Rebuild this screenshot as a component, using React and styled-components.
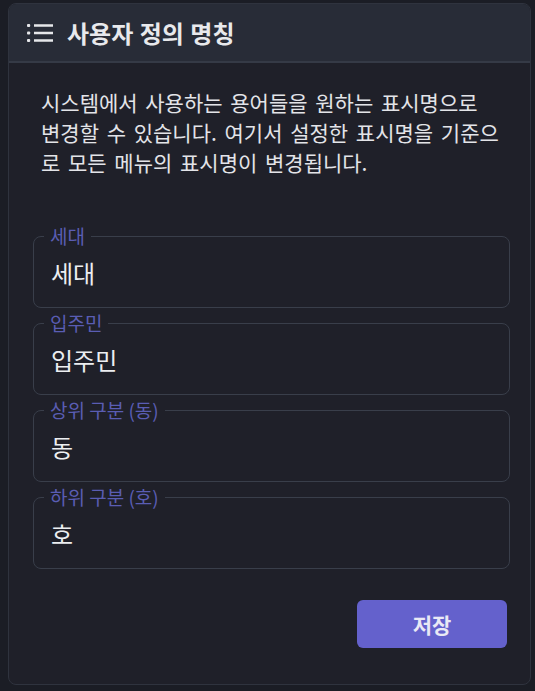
import styled, { createGlobalStyle } from "styled-components";

const GlobalStyle = createGlobalStyle`
  html, body {
    margin: 0;
    padding: 0;
    background-color: #1b1d25;
  }
  body {
    font-family: "Noto Sans CJK KR", "Noto Sans", sans-serif;
    color: #e6e7ea;
  }
  * {
    box-sizing: border-box;
  }
`;

// 용어 목록
const fields = [
  { label: "세대", value: "세대" },
  { label: "입주민", value: "입주민" },
  { label: "상위 구분 (동)", value: "동" },
  { label: "하위 구분 (호)", value: "호" },
];

const ListIcon = () => (
  <svg width="26" height="22" viewBox="0 0 26 22" fill="none">
    <rect x="0" y="2" width="3.2" height="3" rx="1" fill="#e6e7ea" />
    <rect x="0" y="9.5" width="3.2" height="3" rx="1" fill="#e6e7ea" />
    <rect x="0" y="17" width="3.2" height="3" rx="1" fill="#e6e7ea" />
    <path d="M7 3.5H26M7 11H26M7 18.5H26" stroke="#e6e7ea" strokeWidth="2.4" />
  </svg>
);

const App = () => {
  return (
    <Page>
      <GlobalStyle />
      <Card>
        <Header>
          <ListIcon />
          <Title>사용자 정의 명칭</Title>
        </Header>
        <Body>
          <Desc>
            시스템에서 사용하는 용어들을 원하는 표시명으로 변경할 수
            있습니다. 여기서 설정한 표시명을 기준으로 모든 메뉴의 표시명이
            변경됩니다.
          </Desc>
          <FieldList>
            {fields.map((f) => (
              <Field key={f.label}>
                <Legend>{f.label}</Legend>
                <Input defaultValue={f.value} />
              </Field>
            ))}
          </FieldList>
          <Actions>
            <SaveButton>저장</SaveButton>
          </Actions>
        </Body>
      </Card>
    </Page>
  );
};

const Page = styled.div`
  width: 535px;
  height: 691px;
  padding: 3px 4px 6px 8px;
`;

const Card = styled.div`
  height: 682px;
  background-color: #1f2029;
  border: 1px solid #2f333e;
  border-radius: 8px;
  overflow: hidden;
  display: flex;
  flex-direction: column;
`;

const Header = styled.div`
  height: 59px;
  flex-shrink: 0;
  display: flex;
  align-items: center;
  gap: 14px;
  padding: 0 0 0 18px;
  background-color: #282c37;
  border-bottom: 2px solid #353a46;
`;

const Title = styled.h2`
  margin: 0;
  font-size: 24px;
  font-weight: 700;
  word-spacing: 1px;
  color: #e8e9ec;
  line-height: 1;
`;

const Body = styled.div`
  flex: 1;
  padding: 24px 22px 0 24px;
`;

const Desc = styled.p`
  margin: 0 0 0 8px;
  font-size: 21px;
  line-height: 30px;
  word-spacing: 3px;
  color: #e3e4e8;
  width: 458px;
`;

const FieldList = styled.div`
  margin-top: 49px;
  display: flex;
  flex-direction: column;
  gap: 5px;
`;

const Field = styled.fieldset`
  margin: 0;
  width: 477px;
  padding: 11px 17px 20px;
  border: 1px solid #393e4a;
  border-radius: 8px;
`;

const Legend = styled.legend`
  margin-left: -7px;
  padding: 0 6px;
  font-size: 19px;
  line-height: 20px;
  color: #5a5db3;
`;

const Input = styled.input`
  display: block;
  width: 100%;
  height: 30px;
  padding: 0;
  border: none;
  outline: none;
  background: transparent;
  font-family: "Noto Sans CJK KR", "Noto Sans", sans-serif;
  font-size: 24px;
  color: #eceef1;
`;

const Actions = styled.div`
  display: flex;
  justify-content: flex-end;
  margin-top: 31px;
  padding-right: 1px;
`;

const SaveButton = styled.button`
  width: 150px;
  height: 48px;
  border: none;
  border-radius: 6px;
  background-color: #6461cc;
  color: #e9e9f5;
  font-family: "Noto Sans CJK KR", "Noto Sans", sans-serif;
  font-size: 21px;
  font-weight: 700;
  cursor: pointer;
`;

export default App;
